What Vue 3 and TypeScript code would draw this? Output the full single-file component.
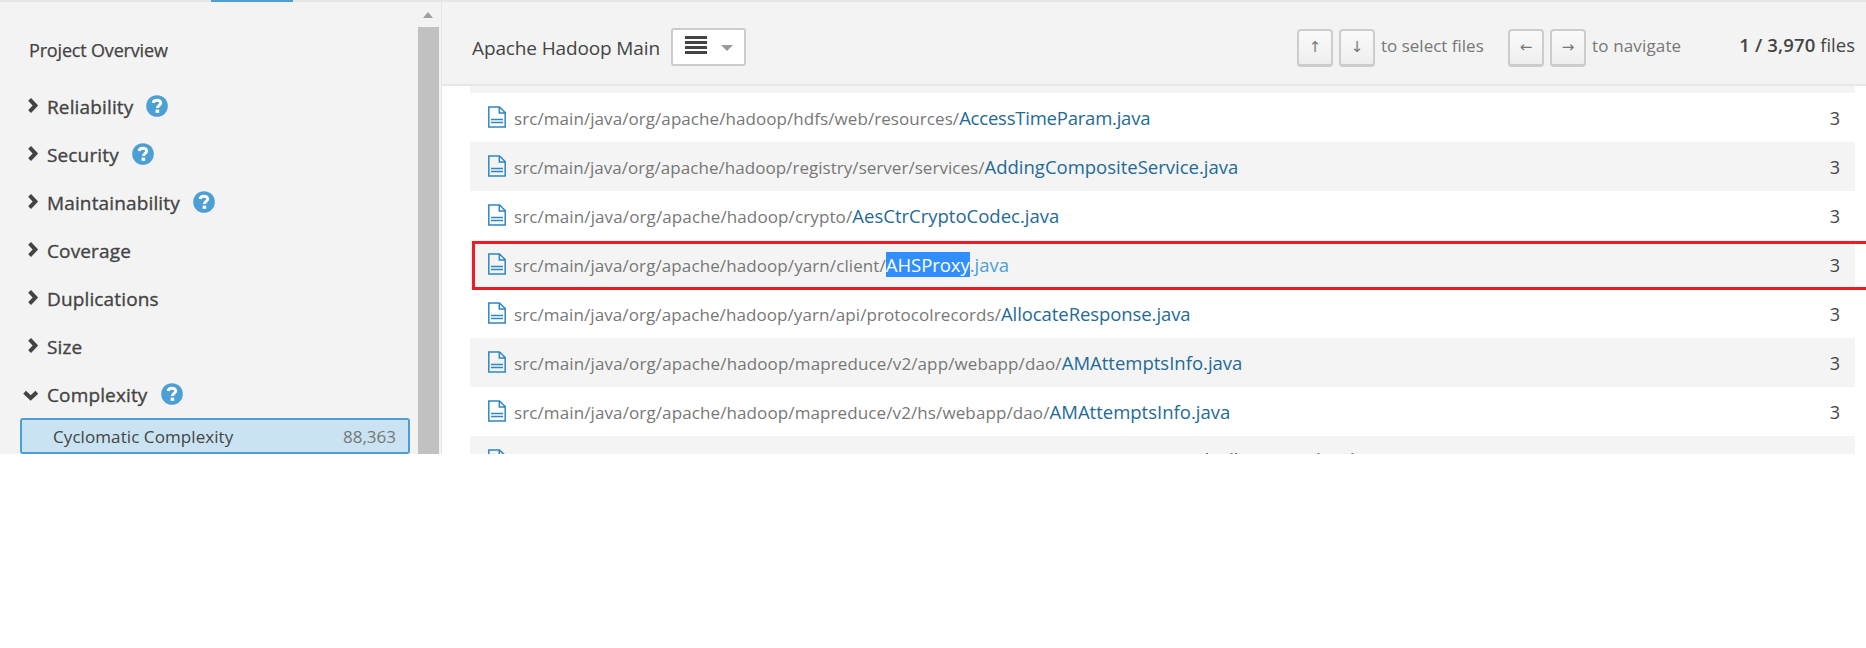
<script setup lang="ts">
interface Group { name: string; help?: boolean; open?: boolean }
interface FileRow { path: string; name: string; pls: number; nls: number; marked?: boolean }

const groups: Group[] = [
  { name: 'Reliability', help: true },
  { name: 'Security', help: true },
  { name: 'Maintainability', help: true },
  { name: 'Coverage' },
  { name: 'Duplications' },
  { name: 'Size' },
  { name: 'Complexity', help: true, open: true },
]

const base = 'src/main/java/org/apache/hadoop/'
const rows: FileRow[] = [
  { path: 'hdfs/web/resources/', name: 'AccessTimeParam.java', pls: 0.07, nls: -0.22 },
  { path: 'registry/server/services/', name: 'AddingCompositeService.java', pls: 0.04, nls: 0 },
  { path: 'crypto/', name: 'AesCtrCryptoCodec.java', pls: 0.12, nls: 0 },
  { path: 'yarn/client/', name: 'AHSProxy', pls: 0.095, nls: -0.05, marked: true },
  { path: 'yarn/api/protocolrecords/', name: 'AllocateResponse.java', pls: 0.085, nls: -0.08 },
  { path: 'mapreduce/v2/app/webapp/dao/', name: 'AMAttemptsInfo.java', pls: 0.115, nls: 0 },
  { path: 'mapreduce/v2/hs/webapp/dao/', name: 'AMAttemptsInfo.java', pls: 0.11, nls: 0 },
]
</script>

<template>
  <div class="app">
    <div class="topline"><span class="tab"></span></div>
    <div class="body">
      <aside class="side">
        <div class="menu">
          <div class="overview">Project Overview</div>
          <div v-for="g in groups" :key="g.name" class="group">
            <svg class="chev" width="17" height="18" viewBox="0 0 17 18">
              <path v-if="g.open" d="M1.600 7.200 7.700 13 13.800 7.200" />
              <path v-else d="M6.600 2.400 12.400 8.500 6.600 14.600" />
            </svg>
            <span class="gname">{{ g.name }}</span>
            <svg v-if="g.help" class="help" width="22" height="22" viewBox="0 0 22 22">
              <circle cx="11" cy="11" r="10.8" fill="#4b9fd5" />
              <path d="M7.200 8C7.400 5.900 8.900 5.200 11 5.200s3.700 1.200 3.700 2.900c0 2.200-3.200 2.400-3.200 4.900" fill="none" stroke="#fff" stroke-width="3" />
              <rect x="9.600" y="14.600" width="3.600" height="3.200" fill="#fff" />
            </svg>
          </div>
          <div class="metric"><span class="mname">Cyclomatic Complexity</span><span class="mval">88,363</span></div>
        </div>
        <div class="scroll"><i class="up"></i><div class="thumb"></div></div>
      </aside>
      <main class="main">
        <header class="head">
          <span class="project">Apache Hadoop Main</span>
          <div class="picker">
            <svg width="22" height="18" viewBox="0 0 22 18"><path d="M0 1.500h22M0 6.500h22M0 11.500h22M0 16.500h22" stroke="#444" stroke-width="3" /></svg>
            <i class="caret"></i>
          </div>
          <div class="keys">
            <kbd>↑</kbd><kbd>↓</kbd><span class="sel">to select files</span>
            <kbd>←</kbd><kbd>→</kbd><span class="nav">to navigate</span>
          </div>
          <span class="count"><b>1 / 3,970</b> files</span>
        </header>
        <div class="list">
          <div class="stub"></div>
          <div v-for="(r, i) in rows" :key="i" class="row">
            <svg class="file" width="18" height="22" viewBox="0 0 18 22"><path d="M.800 1H11.500L17.200 6.500V21H.800zM11.300 1V7H17.200M3 13.500H15M3 16.500H15" /></svg>
            <span class="path" :style="{ letterSpacing: r.pls + 'px' }">{{ base + r.path }}</span>
            <span class="name" :class="{ hl: r.marked }" :style="{ letterSpacing: r.nls + 'px' }">{{ r.name }}</span>
            <span v-if="r.marked" class="ext">.java</span>
            <span class="val">3</span>
            <div v-if="r.marked" class="frame"></div>
          </div>
          <div class="row last">
            <svg class="file" width="18" height="22" viewBox="0 0 18 22"><path d="M.800 1H11.500L17.200 6.500V21H.800zM11.300 1V7H17.200M3 13.500H15M3 16.500H15" /></svg>
            <svg class="tips" width="160" height="1" viewBox="0 0 160 1"><path d="M0 .5h2M24.500 .5h2M29 .5h2M111.500 .5h2M145.500 .5h2" stroke="#4f83ab" /></svg>
          </div>
        </div>
      </main>
    </div>
  </div>
</template>

<style>
body { margin: 0; background: #fff; }
</style>

<style scoped>
.app { width: 1866px; height: 454px; overflow: hidden; font-family: "Open Sans", "Noto Sans", sans-serif; color: #444; display: flex; flex-direction: column; }
.topline { height: 2px; flex: none; background: #e6e6e6; display: flex; }
.tab { width: 82px; height: 2px; margin-left: 211px; background: #4b9fd5; }
.body { display: flex; height: 452px; }
.side { width: 441px; flex: none; background: #f3f3f3; border-right: 1px solid #e6e6e6; display: flex; }
.menu { width: 418px; }
.overview { height: 80px; line-height: 97px; margin-left: 29px; font-size: 18px; letter-spacing: -.17px; -webkit-text-stroke: .25px #444; }
.group { height: 48px; display: flex; align-items: center; margin-left: 23px; white-space: nowrap; }
.chev { flex: none; fill: none; stroke: #444; stroke-width: 4; margin-right: 7px; }
.gname { font-size: 19px; letter-spacing: .14px; padding-top: 2px; -webkit-text-stroke: .35px #444; }
.help { margin-left: 13px; }
.metric { margin-left: 20px; width: 390px; height: 36px; box-sizing: border-box; border: 2px solid #4b9fd5; border-radius: 3px; background: #cae3f2; display: flex; align-items: center; padding: 0 12px 0 31px; font-size: 17px; justify-content: space-between; }
.mname { letter-spacing: .08px; }
.mval { color: #777; padding-top: 1px; }
.scroll { width: 21px; }
.up { display: block; margin: 10px 0 0 5px; width: 0; height: 0; border: 5.5px solid transparent; border-top: 0; border-bottom: 6px solid #a0a0a0; }
.thumb { height: 430px; margin-top: 9px; background: #c1c1c1; }
.main { flex: 1; overflow: hidden; }
.head { height: 82px; border-bottom: 2px solid #e6e6e6; background: #f3f3f3; display: flex; align-items: flex-start; white-space: nowrap; }
.project { margin-left: 30px; line-height: 92px; font-size: 19px; letter-spacing: -.13px; width: 199px; }
.picker { margin-top: 26px; width: 75px; height: 38px; box-sizing: border-box; border: 2px solid #ccc; border-radius: 3px; background: #fff; display: flex; padding: 6px 0 0 12px; }
.caret { margin: 9px 0 0 14px; width: 0; height: 0; border: 6px solid transparent; border-bottom: 0; border-top-color: #999; }
.keys { display: flex; margin-left: 551px; margin-top: 27px; color: #777; font-size: 17px; }
kbd { box-sizing: border-box; width: 36px; height: 38px; margin-right: 6px; border: 2px solid #ccc; border-bottom-width: 3px; border-radius: 4px; background: linear-gradient(#fafafa, #eee); font: 15px "Noto Sans", "DejaVu Sans", sans-serif; line-height: 31px; text-align: center; }
.sel, .nav { line-height: 34px; }
.sel { width: 127px; }
.nav { width: 96px; letter-spacing: .15px; }
.count { margin-left: auto; margin-right: 11px; line-height: 86px; font-size: 18.5px; }
.count b { font-weight: 600; letter-spacing: .15px; }
.list { padding: 0 11px 0 28px; }
.stub { height: 7px; background: #f4f4f4; }
.row { position: relative; height: 49px; display: flex; align-items: baseline; white-space: nowrap; line-height: 50px; }
.row:nth-child(odd) { background: #f4f4f4; }
.file { flex: none; align-self: flex-start; fill: none; stroke: #2e87c3; stroke-width: 1.500; margin: 13px 8px 0 18px; }
.path { color: #777; font-size: 17px; }
.name { color: #236a97; font-size: 18.5px; }
.hl { background: #308efe; color: #fff; line-height: 25px; }
.ext { color: #4b9fd5; font-size: 18.5px; }
.val { margin-left: auto; margin-right: 15px; font-size: 18px; }
.tips { align-self: flex-start; margin: 17px 0 0 692px; }
.frame { position: absolute; left: 2px; right: -14px; top: 1px; height: 43px; border: 3px solid #ed1c24; }
</style>
